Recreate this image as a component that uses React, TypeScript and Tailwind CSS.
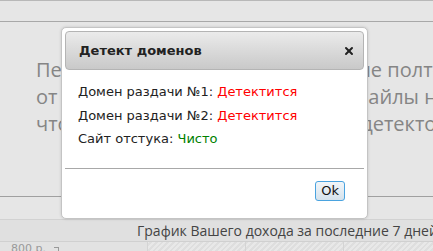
import { X } from 'lucide-react'

const rows = [
  { label: 'Домен раздачи №1:', value: 'Детектится', tone: 'text-[#ff0000]' },
  { label: 'Домен раздачи №2:', value: 'Детектится', tone: 'text-[#ff0000]' },
  { label: 'Сайт отстука:', value: 'Чисто', tone: 'text-[#008000]' },
]

function DomainDialog() {
  return (
    <div className="absolute left-[61px] top-[27px] h-[192px] w-[307px] rounded-[5px] border border-[#c4c4c4] bg-white p-[3px] shadow-[0_0_3px_rgba(0,0,0,0.15)]">
      <div className="flex h-[39px] items-center justify-between rounded-[4px] border border-[#b4b4b4] bg-gradient-to-b from-[#ebebeb] to-[#c9c9c9] pl-[13px] pr-[8px]">
        <span className="text-[13px] font-bold text-[#222]">Детект доменов</span>
        <X className="h-[12px] w-[12px] text-[#222]" strokeWidth={4} />
      </div>
      <div className="flex h-[99px] flex-col gap-[4px] border-b border-[#a8a8a8] pl-[13px] pt-[12px] text-[13px] leading-[19.5px] text-[#222]">
        {rows.map((r) => (
          <div key={r.label}>
            {r.label} <span className={r.tone}>{r.value}</span>
          </div>
        ))}
      </div>
      <div className="flex justify-end pr-[19px] pt-[12px]">
        <button className="h-[20px] rounded-[3px] border border-[#4aa3df] bg-gradient-to-b from-[#f2f6f9] to-[#d5e2ec] px-[5px] text-[13px] leading-[16px] text-[#111]">
          Ok
        </button>
      </div>
    </div>
  )
}

export default function App() {
  return (
    <div className="relative h-[251px] w-[433px] overflow-hidden bg-[#e6e6e6] font-['DejaVu_Sans',sans-serif]">
      <div className="h-[22px] border-y border-t-[#b8b8b8] border-b-[#a8a8a8] bg-[#e6e6e6]" />
      <div className="h-[175px] border-b border-[#a0a0a0] pl-[36px] pt-[34px] font-['Open_Sans',sans-serif] text-[20px] leading-[27px] text-[#858585]">
        <div className="whitespace-nowrap">Перед началом работы проверь не полтора ли часа</div>
        <div className="whitespace-nowrap">от партнёров жалоб и что ваши файлы не детектятся,</div>
        <div className="whitespace-nowrap">что домены раздачи не войдут в детекторы</div>
      </div>
      <div className="h-[22px]" />
      <div className="flex h-[23px] items-center border-y border-t-[#d2d2d2] border-b-[#d0d0d0] bg-[#e0e0e0] pl-[137px] font-['Open_Sans',sans-serif] text-[14px] whitespace-nowrap text-[#444]">
        График Вашего дохода за последние 7 дней
      </div>
      <div className="flex h-[20px] bg-[#e2e2e2]">
        <div className="flex w-[147px] items-start pl-[11px] pt-[1px] text-[11px] leading-[12px] text-[#999]">
          800 р.<span className="ml-[8px] mt-[4px] h-[4px] w-[5px] border-r border-t border-[#999]" />
        </div>
        <div className="flex flex-1 bg-[repeating-linear-gradient(135deg,#e8e8e8_0px,#e8e8e8_2px,#dedede_2px,#dedede_4px)]">
          <div className="w-[98px] border-l border-[#d4d4d4]" />
          <div className="w-[98px] border-l border-[#d4d4d4]" />
          <div className="flex-1 border-l border-[#d4d4d4]" />
        </div>
      </div>
      <DomainDialog />
    </div>
  )
}
